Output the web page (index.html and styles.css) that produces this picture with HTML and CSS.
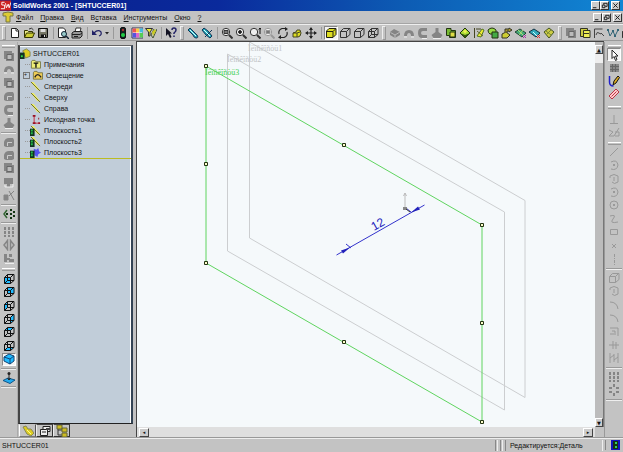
FILE: index.html
```html
<!DOCTYPE html>
<html lang="ru">
<head>
<meta charset="utf-8">
<title>SolidWorks 2001 - [SHTUCCER01]</title>
<link rel="stylesheet" href="styles.css">
</head>
<body>
<svg class="sprite" aria-hidden="true">
  <symbol id="new" viewBox="0 0 12 12"><path d="M2.5 1.5h5l2 2v7h-7z" fill="#fff" stroke="#222"/><path d="M7 1.5V4h2.5" fill="none" stroke="#222"/></symbol>
  <symbol id="open" viewBox="0 0 12 12"><path d="M1.5 10V3.500h3l1 1h4V6" fill="#ee8" stroke="#330"/><path d="M1.500 10.500l2-4.500h8l-2 4.500z" fill="#cc3" stroke="#330"/><path d="M6 2q3-2 4.500 1" fill="none" stroke="#333"/></symbol>
  <symbol id="save" viewBox="0 0 12 12"><path d="M1.500 1.500h9v9h-9z" fill="#776" stroke="#111"/><path d="M3.500 2h5v3h-5z" fill="#ddd"/><path d="M4 7.500h5V11H4z" fill="#111"/><path d="M7 8h1v2H7z" fill="#ddd"/></symbol>
  <symbol id="preview" viewBox="0 0 12 12"><path d="M1.500 1h5l2 2v7.500h-7z" fill="#fff" stroke="#222"/><circle cx="7" cy="7" r="2.500" fill="#9cc" stroke="#123"/><path d="M9 9l3 3" stroke="#123" stroke-width="1.500"/></symbol>
  <symbol id="print" viewBox="0 0 12 12"><path d="M4 5l1-4h5L9 5" fill="#fff" stroke="#333"/><path d="M1 6l2-1.500h8V9L9 11H1z" fill="#999" stroke="#222"/><path d="M1 7.500h8L11 6M3 9.500h4" stroke="#222" fill="none"/></symbol>
  <symbol id="undo" viewBox="0 0 12 12"><path d="M3 6q4-4 7-1 1 3-2 4" fill="none" stroke="#226" stroke-width="1.200"/><path d="M1 3v5h5z" fill="#226"/></symbol>
  <symbol id="drop" viewBox="0 0 6 12"><path d="M1 5h4L3 7.500z" fill="#222"/></symbol>
  <symbol id="traffic" viewBox="0 0 12 12"><rect x="3.500" y=".5" width="5" height="11" rx="1.500" fill="#122" stroke="#111"/><circle cx="6" cy="3" r="1.200" fill="#a33"/><circle cx="6" cy="8" r="2" fill="#2c4"/></symbol>
  <symbol id="palette" viewBox="0 0 12 12"><path d="M1 1h11v10H1z" fill="#fff" stroke="#335"/><path d="M1.500 1.500H5v4H1.500z" fill="#e55"/><path d="M5 1.500h3.500v4H5z" fill="#fc4"/><path d="M8.500 1.500H12v4H8.500z" fill="#4bd"/><path d="M1.500 6H5v4.500H1.500z" fill="#55d"/><path d="M5 6h3.500v4.500H5z" fill="#d6c"/><path d="M8.500 6H12v4.500H8.500z" fill="#5c5"/></symbol>
  <symbol id="filter" viewBox="0 0 12 12"><path d="M.5 1.500h7L5 5v4H3.500V5z" fill="#ee3" stroke="#333"/><path d="M6 8l2 3 4-9M9 2l-3 6" stroke="#453" fill="none"/><path d="M7 5l3-3 1 2-3 5z" fill="#cc2"/></symbol>
  <symbol id="help" viewBox="0 0 12 12"><path d="M1 1v8l2-2 2 4 1.500-1L5 6.500h2z" fill="#112"/><path d="M7 3q0-2 2-2t2 2q0 1.500-2 3v1M9 8.500V10" fill="none" stroke="#226" stroke-width="1.500"/></symbol>
  <symbol id="pencil" viewBox="0 0 12 12"><path d="M1 3l2-2 3 3 4 4q2 3-1 3-2 0-3-3z" fill="#2ab" stroke="#135"/><path d="M3 3l6 6" stroke="#dff"/></symbol>
  <symbol id="pencils" viewBox="0 0 12 12"><path d="M1 3l2-2 4 3 4 5-2 2-4-3z" fill="#2ab" stroke="#135"/><path d="M4 10l7-7" stroke="#135"/><path d="M3 3l6 6" stroke="#dff"/></symbol>
  <symbol id="mag" viewBox="0 0 12 12"><circle cx="5" cy="5" r="3.700" fill="#eee" stroke="currentColor"/><path d="M8 8l3.500 3.500" stroke="currentColor" stroke-width="2"/></symbol>
  <symbol id="magfit" viewBox="0 0 12 12"><use href="#mag"/><path d="M3 3.500h4v3H3z" fill="#777" stroke="currentColor"/></symbol>
  <symbol id="magin" viewBox="0 0 12 12"><use href="#mag"/><path d="M5 3v4M3 5h4" stroke="#111" stroke-width="1.500"/></symbol>
  <symbol id="magdyn" viewBox="0 0 12 12"><use href="#mag"/><path d="M11 1v6M9.800 2.500L11 1l1 1.500" stroke="#111" fill="none"/></symbol>
  <symbol id="rotate" viewBox="0 0 12 12"><path d="M2 7q-1-4 3-5.500h4M10 5q1 4-3 5.500H3" fill="none" stroke="#222" stroke-width="1.200"/><path d="M8 0l3 2-3 2zM4 8l-3 2.500L4 12z" fill="#222"/></symbol>
  <symbol id="face" viewBox="0 0 12 12"><path d="M2 6l3-1 1-2h3l1 3-1 3-2 1H2z" fill="#dd2" stroke="#442"/><path d="M2 6h4l3-1M6 6v4" stroke="#442" fill="none"/></symbol>
  <symbol id="move" viewBox="0 0 12 12"><path d="M6 1v10M1 6h10" stroke="#222" stroke-width="1.200"/><path d="M6 0l2 3H4zM6 12l2-3H4zM0 6l3-2v4zM12 6L9 4v4z" fill="#222"/></symbol>
  <symbol id="shaded" viewBox="0 0 12 12"><path d="M1.500 4L4 1.500h7v6L8 10.500H1.500z" fill="#dd2" stroke="#221"/><path d="M2 4.500h6V10M8 4.500L10.500 2" fill="none" stroke="#221"/></symbol>
  <symbol id="cube" viewBox="0 0 12 12"><path d="M1.500 4.500h6v6h-6zl3-3h6.500v6l-3.500 3M7.500 4.500l3-3" fill="none" stroke="currentColor"/></symbol>
  <symbol id="wire" viewBox="0 0 12 12"><use href="#cube"/><path d="M4.500 1.500v6H11M4.500 7.500l-3 3" fill="none" stroke="currentColor"/></symbol>
  <symbol id="solid" viewBox="0 0 12 12"><path d="M1 5l4-3 6 3v3l-5 3-5-3z" fill="currentColor"/><path d="M1.500 5.500L6 8l5-3M6 8v3" stroke="#bbb" fill="none"/></symbol>
  <symbol id="dome" viewBox="0 0 12 12"><path d="M1 9q0-6 5-6t5 6H8q0-3-2-3T4 9z" fill="currentColor"/><path d="M1 10h3M8 10h3" stroke="#eee"/></symbol>
  <symbol id="cut" viewBox="0 0 12 12"><path d="M10 1H5Q1 1 1 6t4 5h5V8H6Q4 8 4 6t2-2h4z" fill="currentColor"/><path d="M5 11.500h5" stroke="#eee"/></symbol>
  <symbol id="loft" viewBox="0 0 12 12"><path d="M4.500 1h3v4l4 3-2 3h-7l-2-3 4-3z" fill="currentColor"/><path d="M2 11.500h8" stroke="#eee"/></symbol>
  <symbol id="box" viewBox="0 0 12 12"><path d="M1 1h8v2h2v8H3V9H1z" fill="currentColor"/><path d="M4 4.500h5v5H4z" fill="#bbb" stroke="#666"/></symbol>
  <symbol id="round" viewBox="0 0 12 12"><path d="M1 10V6q1-4 5-4h4l1 2v6l-2 1H3z" fill="currentColor"/><path d="M4.500 10V6.500H9" stroke="#ccc" fill="none"/></symbol>
  <symbol id="chip" viewBox="0 0 12 12"><path d="M1 2h9v6H7v3H4V8H1z" fill="currentColor"/><path d="M2 9v2h8V8" fill="none" stroke="#eee"/></symbol>
  <symbol id="rib" viewBox="0 0 12 12"><path d="M1 6h4v5H1zM6 2l5 9M11 2L6 7" fill="currentColor" stroke="currentColor"/></symbol>
  <symbol id="gbox" viewBox="0 0 12 12"><path d="M1.500 1.500H6v2h4.500v7h-6v-2h-3z" fill="#7b3" stroke="#231"/><path d="M5 5h5v5H5z" fill="#dd4" stroke="#231"/></symbol>
  <symbol id="gdiamond" viewBox="0 0 12 12"><path d="M1 6l5-5 5 5-5 5z" fill="#ad3" stroke="#231"/><path d="M1 6l5 2 5-2-5 5z" fill="#351"/><path d="M4 4.500l2-2 2 2-2 2z" fill="#ee5"/></symbol>
  <symbol id="gdraft" viewBox="0 0 12 12"><path d="M1.500 1v10M3 2h5" stroke="#442"/><path d="M4 9l5-7 2 1-3 7z" fill="#ee3" stroke="#572"/><path d="M4 4l6 5" stroke="#663"/></symbol>
  <symbol id="ground" viewBox="0 0 12 12"><path d="M1 3q4-4 8 0v4H3Q1 6 1 3z" fill="#9d4" stroke="#231"/><path d="M5 5h6v6H5z" fill="#4a4" stroke="#231"/></symbol>
  <symbol id="gmove" viewBox="0 0 12 12"><path d="M1 7l4-2 4 3-3 3H1z" fill="#cc3" stroke="#332"/><path d="M4 5V2h4V1l3 2-3 2V4H6v2" fill="#a93" stroke="#332"/></symbol>
  <symbol id="surf" viewBox="0 0 12 12"><path d="M0 5l5-3 6 4-4 4z" fill="#4a7" stroke="#243"/><path d="M3 3l6 6M8 3L4 8" stroke="#ad7"/><path d="M8 8l3 3M11 8l-3 3" stroke="#a3a"/></symbol>
  <symbol id="surfb" viewBox="0 0 12 12"><path d="M0 5l5-3 6 4-4 4z" fill="#3ab" stroke="#134"/><path d="M4 5l4 4" stroke="#cff"/><path d="M8 8l3 3M11 8l-3 3" stroke="#d33"/></symbol>
  <symbol id="knit" viewBox="0 0 12 12"><path d="M1 5l5-4 5 4-5 6z" fill="#cc4" stroke="#452"/><path d="M3 4l5 4M8 3L3 8" stroke="#783"/></symbol>
  <symbol id="ybox" viewBox="0 0 12 12"><path d="M1.500 1.500h7v8h-7z" fill="#cc4" stroke="#332"/><path d="M4.500 3.500H11v7H4.500z" fill="#ee5" stroke="#332"/><path d="M5 6.500h5" stroke="#332"/></symbol>
  <symbol id="curve" viewBox="0 0 12 12"><path d="M1.500 11V2h8M3 8q1-4 3-2t2 0l3 3" fill="none" stroke="#444"/></symbol>
  <symbol id="spline" viewBox="0 0 12 12"><path d="M1 3l2 6 3-5 2 5 3-6" fill="none" stroke="#367"/><path d="M0 2h2v2H0zM5 3h2v2H5zM10 2h2v2h-2zM7 8h2v2H7z" fill="#367"/></symbol>
  <symbol id="mirror" viewBox="0 0 12 12"><path d="M4 2L1 6l3 4" fill="none" stroke="#363" stroke-width="1.500"/><path d="M7 1h2v2H7zM7 5h2v2H7zM7 9h2v2H7zM10 3h2v2h-2zM10 7h2v2h-2zM3 5h2v2H3z" fill="#131"/></symbol>
  <symbol id="dots" viewBox="0 0 12 12"><path d="M1 1h2v3H1zM5 1h2v3H5zM9 1h2v3H9zM1 5h2v3H1zM5 5h2v3H5zM9 5h2v3H9zM1 9h2v2H1zM5 9h2v2H5zM9 9h2v2H9z" fill="currentColor"/></symbol>
  <symbol id="ring" viewBox="0 0 12 12"><path d="M5 0h2v3H5zM5 9h2v3H5zM1 3h3v2H1zM8 3h3v2H8zM1 7h3v2H1zM8 7h3v2H8z" fill="currentColor"/></symbol>
  <symbol id="diamond" viewBox="0 0 12 12"><path d="M4.500 1.500v9L1 6zM7.500 1.500v9L11 6z" fill="none" stroke="currentColor" stroke-width="1.500"/></symbol>
  <symbol id="pair" viewBox="0 0 12 12"><path d="M1 2h3v8H1zM6 2h3v3H6zM6 7h5v3H6zM4 6h3v2H4z" fill="currentColor"/><path d="M2 11.500h9" stroke="#eee"/></symbol>
  <symbol id="vfront" viewBox="0 0 12 12"><path d="M1.500 4.500h6v6h-6z" fill="#2bf"/><use href="#wire"/></symbol>
  <symbol id="vback" viewBox="0 0 12 12"><path d="M4.500 1.500H11v6H4.500z" fill="#2bf"/><use href="#wire"/></symbol>
  <symbol id="vleft" viewBox="0 0 12 12"><path d="M1.500 4.500l3-3v6l-3 3z" fill="#2bf"/><use href="#wire"/></symbol>
  <symbol id="vright" viewBox="0 0 12 12"><path d="M7.500 4.500l3.500-3v6l-3.500 3z" fill="#2bf"/><use href="#wire"/></symbol>
  <symbol id="vtop" viewBox="0 0 12 12"><path d="M1.500 4.500l3-3H11l-3.500 3z" fill="#2bf"/><use href="#wire"/></symbol>
  <symbol id="vbottom" viewBox="0 0 12 12"><path d="M1.500 10.500l3-3H11l-3.500 3z" fill="#2bf"/><use href="#wire"/></symbol>
  <symbol id="iso" viewBox="0 0 12 12"><path d="M1 4l5-3 5 2v5l-4 3-6-3z" fill="#2bf" stroke="#147"/><path d="M1 4l6 2 4-3M7 6v5" fill="none" stroke="#147"/></symbol>
  <symbol id="normal" viewBox="0 0 12 12"><path d="M0 8.500L5 6l7 2-5 3.500z" fill="#2ae" stroke="#158"/><path d="M6 1v7M4.500 6L6 8l1.500-2" stroke="#222" fill="none"/><circle cx="6" cy="1.500" r="1.500" fill="#222"/></symbol>
  <symbol id="arrow" viewBox="0 0 12 12"><path d="M4 1v8.500l2-2 1.500 4 1.500-.8L7.500 7H10z" fill="#fff" stroke="#222"/></symbol>
  <symbol id="grid" viewBox="0 0 12 12"><path d="M2 2h9v8H2z" fill="#888"/><path d="M2 4.500h9M2 7.500h9M4.500 2v8M7.500 2v8" stroke="#666"/></symbol>
  <symbol id="sketch" viewBox="0 0 12 12"><path d="M1.500 1v6q0 4 4 4" fill="none" stroke="#22c" stroke-width="1.500"/><path d="M5 10L6 6l4-5 1.500 1.500L8 8z" fill="#da2" stroke="#111"/></symbol>
  <symbol id="dim" viewBox="0 0 12 12"><path d="M1 8l7-7 3 3-7 7z" fill="#fcc" stroke="#b34"/><path d="M3.500 8.500l5-5" stroke="#b34"/></symbol>
  <symbol id="perp" viewBox="0 0 12 12"><path d="M6 2v8M2 10.500h8" stroke="currentColor"/></symbol>
  <symbol id="rel" viewBox="0 0 12 12"><path d="M1 4l4 2-4 4h5l5-8M7 6h4v4H7" fill="none" stroke="currentColor"/></symbol>
  <symbol id="line" viewBox="0 0 12 12"><path d="M2 10l8-8" stroke="currentColor"/></symbol>
  <symbol id="arc" viewBox="0 0 12 12"><path d="M3 3q6-3 7 3-1 6-7 4" fill="none" stroke="currentColor"/><path d="M5 5h2v2H5z" fill="currentColor"/></symbol>
  <symbol id="arc2" viewBox="0 0 12 12"><path d="M2 5V3q4-3 8 0v6q-4 3-6 0M6 4v4" fill="none" stroke="currentColor"/></symbol>
  <symbol id="circle" viewBox="0 0 12 12"><circle cx="6" cy="6" r="4" fill="none" stroke="currentColor"/><path d="M5 5h2v2H5z" fill="currentColor"/></symbol>
  <symbol id="wave" viewBox="0 0 12 12"><path d="M2 3q7-2 3 3t5 3" fill="none" stroke="currentColor"/></symbol>
  <symbol id="rect" viewBox="0 0 12 12"><path d="M2.500 3.500h7v5h-7z" fill="none" stroke="currentColor"/></symbol>
  <symbol id="point" viewBox="0 0 12 12"><path d="M4 4l4 4M8 4L4 8" stroke="currentColor"/></symbol>
  <symbol id="axis" viewBox="0 0 12 12"><path d="M6.500 1v11" stroke="currentColor" stroke-dasharray="3 1 1 1"/></symbol>
  <symbol id="fillet" viewBox="0 0 12 12"><path d="M2 3q7 0 8 7" fill="none" stroke="currentColor"/></symbol>
  <symbol id="offset" viewBox="0 0 12 12"><path d="M2 3h8v8M4 6h3v4M2 9h4" fill="none" stroke="currentColor"/></symbol>
  <symbol id="trim" viewBox="0 0 12 12"><path d="M1 6h10M5 2v8M8 3v7" stroke="currentColor"/></symbol>
  <symbol id="mir" viewBox="0 0 12 12"><path d="M2 1v10M10 1v10M6 2v8M2 6l4-3M6 8l4-3" stroke="currentColor"/></symbol>
  <symbol id="part" viewBox="0 0 12 12"><path d="M1 2l3-1 2 3 3 0 3 4-3 3-4-2z" fill="#dc2" stroke="#885"/><path d="M5 5l4 4" stroke="#ff8"/></symbol>
  <symbol id="partmark" viewBox="0 0 12 12"><path d="M3 3l4-2 4 3v5l-5 2z" fill="#dc2" stroke="#885"/><path d="M0 5h5v7H0z" fill="#132"/><path d="M1 8h2v2H1z" fill="#3d4"/></symbol>
  <symbol id="note" viewBox="0 0 12 12"><path d="M1.500 3l1-1.500h3L6.500 3h5v7h-10z" fill="#ee7" stroke="#774"/><path d="M4 4.500h5M6.500 5v4.500" stroke="#111" stroke-width="1.500"/></symbol>
  <symbol id="lamp" viewBox="0 0 12 12"><path d="M1.500 3l1-1.500h3L6.500 3h5v7h-10z" fill="#ec5" stroke="#774"/><path d="M3 8q3-6 7 0" stroke="#222" stroke-width="1.500" fill="none"/></symbol>
  <symbol id="plane" viewBox="0 0 12 12"><path d="M1 1l3 0 7 9-3 0z" fill="#ee6"/><path d="M1 1l10 10" stroke="#662"/></symbol>
  <symbol id="origin" viewBox="0 0 12 12"><path d="M4.500 2v8H10" fill="none" stroke="#c23"/><path d="M3 1h3v2H3zM3 9h3v2H3zM9 9h2v2H9zM9 4h1v2H9z" fill="#912"/></symbol>
  <symbol id="planemark" viewBox="0 0 12 12"><use href="#plane"/><path d="M0 4h5v8H0z" fill="#132"/><path d="M1 5h2v2H1zM1 8h2v2H1z" fill="#2b4"/></symbol>
  <symbol id="planesel" viewBox="0 0 12 12"><path d="M4 2l3 1 2-2 1 4 2 1-3 2-1 3-3-2z" fill="#55e"/><path d="M0 4h5v8H0z" fill="#132"/><path d="M1 5h2v2H1zM1 8h2v2H1z" fill="#2b4"/></symbol>
  <symbol id="props" viewBox="0 0 12 12"><path d="M1.500 4.500h7v6h-7zM4 4V1.500h7v5H9M3 7h4" fill="#eee" stroke="#222"/><path d="M7 3h4v2H7z" fill="#444"/></symbol>
  <symbol id="config" viewBox="0 0 12 12"><path d="M2 1v9h4M2 5h4" fill="none" stroke="#333"/><path d="M1 0h5v4H1zM6 3h5v4H6zM6 8h5v4H6z" fill="#cb2" stroke="#663"/></symbol>
  <symbol id="min" viewBox="0 0 8 8"><path d="M1 6.500h4" stroke="#111"/></symbol>
  <symbol id="restore" viewBox="0 0 8 8"><path d="M3 3V1.500h4V5H5M1.500 3.500h3v3h-3z" fill="none" stroke="#111"/></symbol>
  <symbol id="close" viewBox="0 0 8 8"><path d="M1.500 1.500l5 5M6.500 1.500l-5 5" stroke="#111"/></symbol>
</svg>
<div class="app">
  <header class="title">
    <svg class="logo" viewBox="0 0 12 11" aria-hidden="true"><path d="M0 0h12v11H0z" fill="#c22"/><path d="M5 2H2v3h3v4H1M6 3l1 5 2-4 1 4 2-6" fill="none" stroke="#fff"/></svg>
    <h1>SolidWorks 2001 - [SHTUCCER01]</h1>
    <div class="wins">
      <button aria-label="Свернуть"><svg><use href="#min"/></svg></button><button aria-label="Восстановить"><svg><use href="#restore"/></svg></button><button class="x" aria-label="Закрыть"><svg><use href="#close"/></svg></button>
    </div>
  </header>
  <nav class="menu">
    <svg class="doc" viewBox="0 0 12 12" aria-hidden="true"><path d="M1 2q5-2 10 0v3H8v6H4V5H1z" fill="#dc3" stroke="#774"/></svg>
    <button><u>Ф</u>айл</button><button><u>П</u>равка</button><button><u>В</u>ид</button><button>В<u>с</u>тавка</button><button><u>И</u>нструменты</button><button><u>О</u>кно</button><button><u>?</u></button>
    <div class="wins">
      <button aria-label="Свернуть документ"><svg><use href="#min"/></svg></button><button aria-label="Восстановить документ"><svg><use href="#restore"/></svg></button><button class="x" aria-label="Закрыть документ"><svg><use href="#close"/></svg></button>
    </div>
  </nav>
  <div class="bar">
    <i class="grip"></i>
    <button aria-label="Создать"><svg><use href="#new"/></svg></button><button aria-label="Открыть"><svg><use href="#open"/></svg></button><button aria-label="Сохранить"><svg><use href="#save"/></svg></button>
    <i class="sep"></i>
    <button aria-label="Просмотр"><svg><use href="#preview"/></svg></button><button aria-label="Печать"><svg><use href="#print"/></svg></button>
    <i class="sep"></i>
    <button aria-label="Отменить"><svg><use href="#undo"/></svg></button><button class="narrow" aria-label="Список отмены"><svg><use href="#drop"/></svg></button>
    <i class="sep"></i>
    <button aria-label="Перестроить"><svg><use href="#traffic"/></svg></button><button aria-label="Цвет"><svg><use href="#palette"/></svg></button><button aria-label="Фильтр"><svg><use href="#filter"/></svg></button>
    <i class="sep"></i>
    <button aria-label="Справка"><svg><use href="#help"/></svg></button>
    <i class="grip"></i>
    <button aria-label="Ориентация"><svg><use href="#pencil"/></svg></button><button aria-label="Предыдущий вид"><svg><use href="#pencils"/></svg></button>
    <i class="sep"></i>
    <button aria-label="Во весь экран"><svg><use href="#magfit"/></svg></button><button aria-label="Увеличить область"><svg><use href="#magin"/></svg></button><button aria-label="Масштаб"><svg><use href="#magdyn"/></svg></button><button class="faint" aria-label="Масштаб выбранного"><svg><use href="#magfit"/></svg></button><button aria-label="Вращать"><svg><use href="#rotate"/></svg></button><button aria-label="Грань"><svg><use href="#face"/></svg></button><button aria-label="Переместить"><svg><use href="#move"/></svg></button>
    <i class="sep"></i>
    <button class="on" aria-label="Закрасить"><svg><use href="#shaded"/></svg></button><button aria-label="Без невидимых линий"><svg><use href="#cube"/></svg></button><button aria-label="Невидимые серым"><svg><use href="#cube"/></svg></button><button aria-label="Каркас"><svg><use href="#wire"/></svg></button>
    <i class="grip"></i>
    <button class="off" aria-label="Вытянуть"><svg><use href="#solid"/></svg></button><button class="off" aria-label="Повернуть"><svg><use href="#dome"/></svg></button><button class="off" aria-label="Вырез"><svg><use href="#cut"/></svg></button><button class="off" aria-label="Сечения"><svg><use href="#loft"/></svg></button><button aria-label="Эквидистанта"><svg><use href="#gbox"/></svg></button><button aria-label="Плоская"><svg><use href="#gdiamond"/></svg></button><button aria-label="Линейчатая"><svg><use href="#gdraft"/></svg></button><button aria-label="Сшить"><svg><use href="#ground"/></svg></button><button aria-label="Удлинить"><svg><use href="#gmove"/></svg></button><button aria-label="Отсечь"><svg><use href="#surf"/></svg></button><button aria-label="Удалить поверхность"><svg><use href="#surfb"/></svg></button><button aria-label="Заполнить"><svg><use href="#knit"/></svg></button>
    <i class="grip"></i>
    <button class="off" aria-label="Линия разъема"><svg><use href="#box"/></svg></button><button aria-label="Проекция"><svg><use href="#ybox"/></svg></button><button aria-label="Кривая"><svg><use href="#curve"/></svg></button><button aria-label="Кривая по точкам"><svg><use href="#spline"/></svg></button><button aria-label="Спираль"><svg><use href="#wire"/></svg></button>
  </div>
  <main>
    <div class="side left">
      <i class="vgrip"></i>
      <div class="g6 off"><button aria-label="Бобышка"><svg><use href="#box"/></svg></button><button aria-label="Купол"><svg><use href="#dome"/></svg></button><button aria-label="Вырез вытянуть"><svg><use href="#box"/></svg></button><button aria-label="Вырез повернуть"><svg><use href="#round"/></svg></button><button aria-label="Вырез по траектории"><svg><use href="#cut"/></svg></button><button aria-label="По сечениям"><svg><use href="#loft"/></svg></button></div>
      <i class="vsep"></i>
      <div class="g5 off"><button aria-label="Скругление"><svg><use href="#round"/></svg></button><button aria-label="Фаска"><svg><use href="#round"/></svg></button><button aria-label="Оболочка"><svg><use href="#box"/></svg></button><button aria-label="Уклон"><svg><use href="#chip"/></svg></button><button aria-label="Ребро"><svg><use href="#rib"/></svg></button></div>
      <i class="vsep"></i>
      <div><button aria-label="Отверстие"><svg><use href="#mirror"/></svg></button></div>
      <i class="vsep"></i>
      <div class="g3 off"><button aria-label="Линейный массив"><svg><use href="#dots"/></svg></button><button aria-label="Круговой массив"><svg><use href="#diamond"/></svg></button><button aria-label="Зеркало"><svg><use href="#pair"/></svg></button></div>
      <i class="vgrip"></i>
      <div class="g7"><button aria-label="Вид спереди"><svg><use href="#vfront"/></svg></button><button aria-label="Вид сзади"><svg><use href="#vback"/></svg></button><button aria-label="Вид слева"><svg><use href="#vleft"/></svg></button><button aria-label="Вид справа"><svg><use href="#vright"/></svg></button><button aria-label="Вид сверху"><svg><use href="#vtop"/></svg></button><button aria-label="Вид снизу"><svg><use href="#vbottom"/></svg></button><button class="on" aria-label="Изометрия"><svg><use href="#iso"/></svg></button></div>
      <i class="vsep"></i>
      <div><button aria-label="Перпендикулярно"><svg><use href="#normal"/></svg></button></div>
      <i class="vsep"></i>
    </div>
    <aside>
      <div class="tree">
        <div class="root"><svg><use href="#partmark"/></svg>SHTUCCER01</div>
        <ul>
          <li><svg><use href="#note"/></svg>Примечания</li>
          <li class="more"><svg><use href="#lamp"/></svg>Освещение</li>
          <li><svg><use href="#plane"/></svg>Спереди</li>
          <li><svg><use href="#plane"/></svg>Сверху</li>
          <li><svg><use href="#plane"/></svg>Справа</li>
          <li><svg><use href="#origin"/></svg>Исходная точка</li>
          <li><svg><use href="#planemark"/></svg>Плоскость1</li>
          <li><svg><use href="#planemark"/></svg>Плоскость2</li>
          <li><svg><use href="#planesel"/></svg>Плоскость3</li>
        </ul>
      </div>
      <div class="tabs"><button class="cur" aria-label="Дерево"><svg><use href="#part"/></svg></button><button aria-label="Свойства"><svg><use href="#props"/></svg></button><button aria-label="Конфигурации"><svg><use href="#config"/></svg></button></div>
    </aside>
    <section class="view">
      <div class="canvas">
        <svg viewBox="137 42 458 384" preserveAspectRatio="xMinYMin meet" role="img" aria-label="Плоскости детали">
          <g fill="none" stroke="#ccced0">
            <path d="M249.500 42L525 200.500v197L249.500 238z"/>
            <path d="M227.500 54L504.500 212v198L227.500 251z"/>
          </g>
          <g class="lbl"><text x="248" y="51">Ïëîñêîñòü1</text><text x="227" y="62">Ïëîñêîñòü2</text><text class="sel" x="205" y="75">Ïëîñêîñòü3</text></g>
          <path d="M206 66l276 159v197L206 263z" fill="none" stroke="#5fd45f"/>
          <g fill="#ffc" stroke="#231"><path d="M204.500 64.500h3v3h-3zM342.500 143.500h3v3h-3zM480.500 223.500h3v3h-3zM480.500 321.500h3v3h-3zM480.500 420.500h3v3h-3zM342.500 340.500h3v3h-3zM204.500 261.500h3v3h-3zM204.500 162.500h3v3h-3z"/></g>
          <path d="M336.500 255L424.500 205M346 244l5 4M406 208l5 4" stroke="#33c" fill="none"/>
          <path d="M350 247.500l-9 3 2 3zM411 212.500l7-6 2 3z" fill="#22b"/>
          <path d="M405 208v-15M403.500 196l1.500-3 1.500 3" fill="none" stroke="#bbb"/><path d="M403 207h4v3h-4z" fill="#888"/><path d="M406 209l4 3" stroke="#333"/>
          <text class="dim" transform="translate(374 231) rotate(-30)">12</text>
        </svg>
      </div>
      <div class="vscroll"><button aria-label="Вверх">▲</button><i></i><button aria-label="Вниз">▼</button></div>
      <div class="hscroll"><button aria-label="Влево">◂</button><button aria-label="Вправо">▸</button></div>
      <i class="corner"></i>
    </section>
    <div class="side right">
      <i class="vgrip"></i>
      <div class="g4"><button class="on" aria-label="Выбрать"><svg><use href="#arrow"/></svg></button><button aria-label="Сетка"><svg><use href="#grid"/></svg></button><button aria-label="Эскиз"><svg><use href="#sketch"/></svg></button><button aria-label="Размер"><svg><use href="#dim"/></svg></button></div>
      <i class="vgrip tall"></i>
      <div class="g2 dim-set"><button aria-label="Взаимосвязь"><svg><use href="#perp"/></svg></button><button aria-label="Показать взаимосвязи"><svg><use href="#rel"/></svg></button></div>
      <i class="vgrip"></i>
      <div class="g9 dim-set"><button aria-label="Линия"><svg><use href="#line"/></svg></button><button aria-label="Дуга"><svg><use href="#arc"/></svg></button><button aria-label="Касательная дуга"><svg><use href="#arc2"/></svg></button><button aria-label="Дуга через точки"><svg><use href="#arc"/></svg></button><button aria-label="Окружность"><svg><use href="#circle"/></svg></button><button aria-label="Сплайн"><svg><use href="#wave"/></svg></button><button aria-label="Прямоугольник"><svg><use href="#rect"/></svg></button><button aria-label="Точка"><svg><use href="#point"/></svg></button><button aria-label="Осевая"><svg><use href="#axis"/></svg></button></div>
      <i class="vsep"></i>
      <div class="g7 dim-set"><button aria-label="Преобразовать"><svg><use href="#cube"/></svg></button><button aria-label="Симметрия"><svg><use href="#arc2"/></svg></button><button aria-label="Скруглить"><svg><use href="#fillet"/></svg></button><button aria-label="Снять фаску"><svg><use href="#fillet"/></svg></button><button aria-label="Смещение"><svg><use href="#offset"/></svg></button><button aria-label="Усечь"><svg><use href="#trim"/></svg></button><button aria-label="Отразить"><svg><use href="#mir"/></svg></button></div>
      <i class="vsep"></i>
      <div class="g2 off"><button aria-label="Массив эскиза"><svg><use href="#dots"/></svg></button><button aria-label="Круговой массив эскиза"><svg><use href="#ring"/></svg></button></div>
      <i class="vsep"></i>
    </div>
  </main>
  <footer><span class="file">SHTUCCER01</span><i></i><i></i><span class="state">Редактируется:Деталь</span><span class="lamp"><svg viewBox="0 0 9 10" aria-hidden="true"><path d="M0 0h9v10H0z" fill="#11b"/><path d="M2 1h5v8H2z" fill="#131"/><path d="M4 2h2v2H4zM4 6h2v2H4z" fill="#3c6"/></svg></span></footer>
</div>
</body>
</html>
```
FILE: styles.css
```css
* { box-sizing: border-box; }
html, body { height: 100%; margin: 0; }
body { font: 7px/11px "Liberation Sans", sans-serif; color: #111; background: #c3c3c3; overflow: hidden; }
button { padding: 0; margin: 0; border: 0; background: none; font: inherit; color: inherit; display: flex; align-items: center; justify-content: center; flex: none; }
svg { display: block; width: 12px; height: 12px; flex: none; }
i { flex: none; }
.sprite { position: absolute; width: 0; height: 0; }
.app { height: 100%; display: flex; flex-direction: column; }

.title { display: flex; align-items: center; height: 11px; flex: none; background: linear-gradient(90deg, #0a1f8c, #0a2a9c 35%, #0d5cb4 65%, #1186d4); color: #fff; }
.title h1 { margin: 0; font-size: 7px; font-weight: bold; line-height: 11px; }
.logo { width: 11px; height: 11px; margin-right: 2px; }
.wins { display: flex; margin-left: auto; padding-right: 3px; }
.menu .wins { padding-right: 1px; }
.wins button { width: 9px; height: 9px; background: #ccc; border: 1px solid; border-color: #fff #333 #333 #fff; }
.wins .x { margin-left: 2px; }
.wins svg { width: 7px; height: 7px; }

.menu { display: flex; align-items: center; height: 13px; flex: none; padding-left: 2px; gap: 7px; border-bottom: 1px solid #a5a5a5; }
.menu .doc { margin-right: -5px; }
.menu u { text-underline-offset: 1px; text-decoration-thickness: 1px; }

.bar { display: flex; align-items: center; height: 17px; flex: none; overflow: hidden; border-top: 1px solid #eee; border-bottom: 1px solid #999; }
.bar button { width: 14px; height: 14px; color: #333; }
.bar .narrow { width: 6px; }
.narrow svg { width: 6px; }
.bar .sep { width: 1px; height: 12px; margin: 0 2px 0 3px; background: #999; }
.grip { width: 4px; height: 14px; margin: 0 2px; border: 1px solid; border-color: #eee #999 #999 #eee; }
.off, .bar .off { color: #858585; }
.bar .faint { color: #999; }
.bar .on, .side .on { background: #f3f3f3; border: 1px solid; border-color: #888 #fff #fff #888; }

main { flex: 1; min-height: 0; display: flex; padding-top: 1px; }
.side { width: 18px; flex: none; display: flex; flex-direction: column; border-right: 1px solid #aaa; }
.side div { display: grid; grid-auto-rows: 1fr; justify-items: center; flex: none; }
.side button { width: 14px; height: 100%; min-height: 13px; }
.side .g2 { height: 27px; }
.side .g3 { height: 40px; }
.side .g4 { height: 53px; }
.side .g5 { height: 67px; }
.side .g6 { height: 81px; }
.side .g7 { height: 94px; }
.side .g9 { height: 121px; }
.dim-set { color: #999; }
.vgrip { height: 3px; margin: 3px 2px 0; border-top: 1px solid #fff; border-bottom: 1px solid #999; }
.vgrip.tall { margin-top: 5px; margin-bottom: 3px; }
.vsep { height: 2px; margin: 2px 1px 1px; border-top: 1px solid #999; border-bottom: 1px solid #eee; }
.left .vgrip { margin-bottom: 1px; }
.right .vgrip { margin-left: 3px; }
.right { border: 0; border-left: 1px solid #999; width: 19px; }

aside { width: 115px; flex: none; display: flex; flex-direction: column; padding-top: 3px; }
.tree { flex: 1; background: #c1cdd9; border: 2px solid #444; border-right-color: #345; border-bottom: 1px solid #222; border-top: 1px solid #666; box-shadow: inset -1px 0 #fff, inset 0 1px #fff; padding-top: 2px; }
.tree svg { width: 11px; height: 11px; margin-right: 3px; }
.root, li { display: flex; align-items: center; height: 11px; white-space: nowrap; }
.tree .root svg { margin-right: 2px; }
.tree ul { list-style: none; margin: 0; padding: 0 0 0 10px; border-bottom: 1px solid #bb2; }
.tree li::before { content: ""; width: 5px; border-top: 1px dotted #999; margin-left: -5px; }
.tree .more::before { content: "+"; width: 5px; height: 5px; border: 1px solid #777; font-size: 5px; line-height: 3px; margin-left: -7px; margin-right: 2px; }
.tabs { display: flex; height: 13px; flex: none; padding-left: 1px; }
.tabs button { width: 17px; height: 13px; border: 1px solid; border-color: #444 #333 #333 #eee; }
.tabs .cur { border-color: #c3c3c3 #555 #777 #fff; }

.view { flex: 1; min-width: 0; margin-left: 3px; display: grid; grid-template: minmax(0, 1fr) 10px / minmax(0, 1fr) 9px; border-top: 1px solid #444; border-left: 1px solid #444; margin-top: -1px; }
.canvas { background: #f5f9fb; overflow: hidden; }
.canvas svg { width: 100%; height: auto; }
.lbl { font: 8px "Liberation Serif", serif; fill: #c2c4c6; }
.lbl .sel { fill: #3fce4f; }
.dim { font: 12px "Liberation Sans", sans-serif; fill: #22b; }
.vscroll { display: flex; flex-direction: column; background: #bcbcbc; padding-top: 3px; border-right: 1px solid #777; }
.vscroll i { height: 9px; background: #eee; }
.vscroll button, .hscroll button { width: 8px; height: 9px; background: #ccc; border: 1px solid; border-color: #fff #444 #444 #fff; font: 5px/6px "DejaVu Sans", sans-serif; }
.vscroll button:last-child { margin-top: auto; }
.hscroll { display: flex; justify-content: space-between; align-items: center; background: #dfdfdf; padding: 0 2px; }
.hscroll button { width: 10px; }
.corner { background: #c3c3c3; }

footer { display: flex; align-items: center; height: 15px; flex: none; border-top: 1px solid #999; box-shadow: inset 0 1px #eee; gap: 2px; }
footer .file { flex: 1; padding-left: 2px; }
footer i { width: 3px; height: 11px; border-left: 1px solid #888; border-right: 1px solid #eee; }
.state { width: 98px; padding-left: 4px; border-left: 1px solid #888; border-right: 1px solid #eee; white-space: nowrap; }
.lamp { padding: 0 3px 0 5px; border-left: 1px solid #888; }
.lamp svg { width: 9px; height: 10px; }
```
